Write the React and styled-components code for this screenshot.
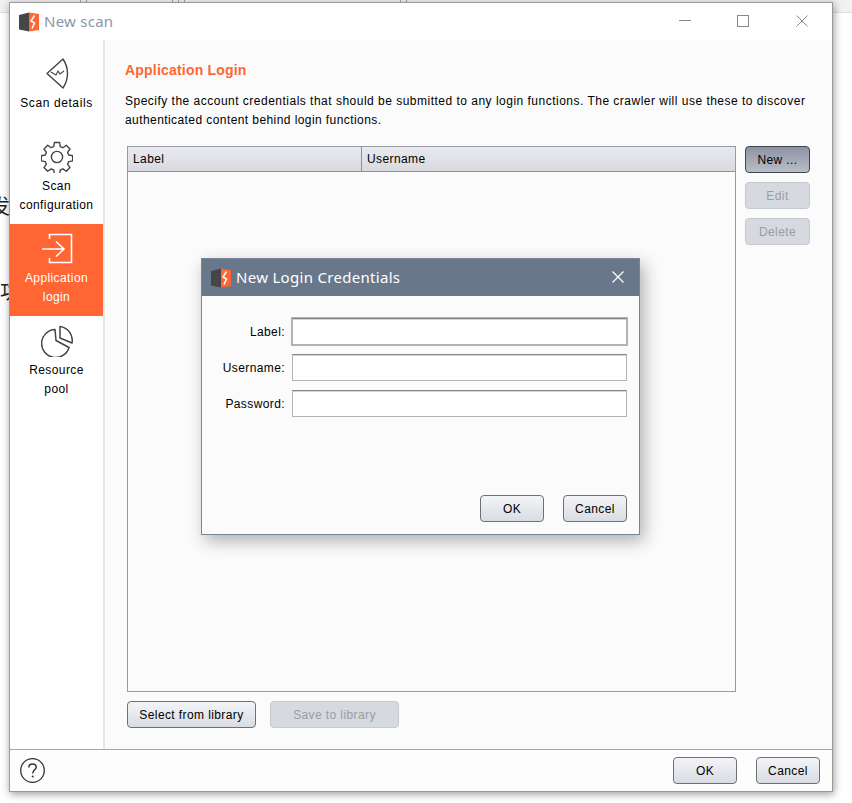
import React from "react";
import styled, { createGlobalStyle } from "styled-components";

const GlobalStyle = createGlobalStyle`
  html, body {
    margin: 0;
    padding: 0;
    background: #fff;
  }
  body {
    font-family: "Liberation Sans", Arial, sans-serif;
    font-size: 12px;
    color: #000;
  }
`;

const Desktop = styled.div`
  position: relative;
  width: 852px;
  height: 803px;
  overflow: hidden;
  background: #fff;
`;

const BackdropEdge = styled.div`
  position: absolute;
  top: 0;
  left: 0;
  right: 0;
  height: 12px;
  background: #f1f1f1;
  border-bottom: 1px solid #dedede;
`;

const BackdropTick = styled.div`
  position: absolute;
  top: 0;
  left: ${p => p.$left}px;
  width: 1px;
  height: 3px;
  background: #a8a8a8;
`;

const BackdropGlyph = styled.span`
  position: absolute;
  left: ${p => p.$left}px;
  top: ${p => p.$top}px;
  font-family: "Noto Sans CJK SC", sans-serif;
  font-size: 20px;
  line-height: 24px;
  color: #222;
`;

const Window = styled.div`
  position: absolute;
  left: 9px;
  top: 2px;
  width: 822px;
  height: 788px;
  display: flex;
  flex-direction: column;
  background: #fbfbfb;
  border: 1px solid #9a9a9a;
  box-shadow: 1px 2px 8px rgba(0, 0, 0, 0.4);
`;

const TitleBar = styled.div`
  flex: 0 0 37px;
  display: flex;
  align-items: center;
  padding: 0 0 0 9px;
  background: #fff;
`;

const WindowTitle = styled.span`
  margin: 0 0 2px 5px;
  font-family: "Noto Sans", sans-serif;
  font-size: 15px;
  letter-spacing: 0.25px;
  color: #8c96a4;
`;

const WindowControls = styled.div`
  margin-left: auto;
  align-self: flex-start;
  display: flex;
`;

const ControlButton = styled.div`
  width: ${p => p.$width}px;
  height: 36px;
  display: flex;
  align-items: center;
  justify-content: center;
`;

const Body = styled.div`
  flex: 1;
  min-height: 0;
  display: flex;
`;

const Sidebar = styled.nav`
  flex: 0 0 93px;
  background: #fff;
  border-right: 2px solid #e6e6e6;
`;

const NavItem = styled.div`
  box-sizing: border-box;
  height: 92px;
  padding-bottom: ${p => p.$lift || 0}px;
  display: flex;
  flex-direction: column;
  align-items: center;
  justify-content: center;
  text-align: center;
  background: ${p => (p.$active ? "#ff6633" : "transparent")};
  color: ${p => (p.$active ? "#fff" : "#000")};
  svg {
    display: block;
    margin-bottom: 4px;
  }
`;

const NavLabel = styled.div`
  font-size: 12px;
  line-height: 19px;
  letter-spacing: ${p => p.$spacing || 0.4}px;
`;

const Content = styled.main`
  flex: 1;
  min-width: 0;
  display: flex;
  flex-direction: column;
  padding: 21px 22px 21px 20px;
`;

const Heading = styled.h2`
  margin: 0;
  font-size: 14px;
  line-height: 18px;
  font-weight: 700;
  letter-spacing: 0.2px;
  color: #ff6633;
`;

const Description = styled.div`
  margin: 13px 0 0;
  font-size: 12px;
  line-height: 19px;
`;

const DescriptionLine = styled.div`
  white-space: nowrap;
  letter-spacing: ${p => p.$spacing}px;
`;

const TableRow = styled.div`
  flex: 1;
  min-height: 0;
  display: flex;
  gap: 9px;
  margin: 16px 0 0 2px;
`;

const Table = styled.div`
  flex: 0 0 609px;
  box-sizing: border-box;
  background: #fbfbfb;
  border: 1px solid #9a9aa6;
`;

const TableHead = styled.div`
  height: 24px;
  display: flex;
  background: linear-gradient(#e9eaee, #d8dae0);
  border-bottom: 1px solid #8e929c;
`;

const HeadCell = styled.div`
  box-sizing: border-box;
  flex: ${p => (p.$grow ? "1" : "0 0 233px")};
  padding-left: 5px;
  line-height: 24px;
  letter-spacing: 0.4px;
  border-left: ${p => (p.$grow ? "1px solid #8e929c" : "none")};
`;

const SideButtons = styled.div`
  flex: 0 0 65px;
  display: flex;
  flex-direction: column;
  gap: 9px;
`;

const Button = styled.button`
  box-sizing: border-box;
  width: ${p => p.$width}px;
  height: 27px;
  padding: 0;
  font-family: inherit;
  font-size: 12px;
  letter-spacing: 0.4px;
  border-radius: 4px;
  color: ${p => (p.$disabled ? "#9a9da4" : "#000")};
  border: 1px solid ${p => (p.$disabled ? "#c6c9d0" : p.$primary ? "#3f4450" : "#6e7078")};
  background: ${p =>
    p.$disabled
      ? "#d6d9df"
      : p.$primary
      ? "linear-gradient(#8d93a3, #b9bdc8)"
      : "linear-gradient(#f3f4f6, #d9dce3)"};
`;

const LibraryBar = styled.div`
  display: flex;
  gap: 14px;
  margin: 9px 0 0 2px;
`;

const Footer = styled.footer`
  flex: 0 0 41px;
  display: flex;
  align-items: center;
  padding: 0 12px 0 10px;
  border-top: 1px solid #a6a6a6;
  background: #fdfdfd;
`;

const FooterButtons = styled.div`
  margin-left: auto;
  display: flex;
  gap: 19px;
`;

const Dialog = styled.div`
  position: absolute;
  left: 201px;
  top: 258px;
  width: 437px;
  height: 275px;
  display: flex;
  flex-direction: column;
  background: #fbfbfb;
  border: 1px solid #78849a;
  box-shadow: 4px 6px 16px rgba(0, 0, 0, 0.3);
`;

const DialogBar = styled.div`
  flex: 0 0 37px;
  display: flex;
  align-items: center;
  padding: 0 15px 0 9px;
  background: #68778a;
`;

const DialogTitle = styled.span`
  margin: 0 0 2px 5px;
  font-family: "Noto Sans", sans-serif;
  font-size: 15px;
  letter-spacing: 0.3px;
  color: #fff;
`;

const DialogClose = styled.svg`
  margin: 0 0 1px auto;
`;

const Form = styled.div`
  flex: 1;
  display: grid;
  grid-template-columns: 83px 335px;
  grid-auto-rows: 27px;
  column-gap: 7px;
  row-gap: 9px;
  align-content: start;
  padding: 22px 0 0;
`;

const FieldLabel = styled.label`
  text-align: right;
  line-height: 28px;
  letter-spacing: 0.4px;
`;

const Field = styled.div`
  box-sizing: border-box;
  background: #fff;
  border: 1px solid #b4b4b4;
  border-top-color: #858585;
  box-shadow: inset 0 1px 0 #d4d4d4 ${p => (p.$focused ? ", 0 0 0 1px #8fb8e6" : "")};
`;

const DialogActions = styled.div`
  display: flex;
  justify-content: flex-end;
  gap: 19px;
  padding: 0 12px 12px 0;
`;

const LogoIcon = () => (
  <svg width="20" height="20" viewBox="0 0 20 20">
    <path d="M0 3 L10 0.5 V19.5 L0 17.5 Z" fill="#45454a" />
    <path d="M10 0.5 L20 2 V18 L10 19.5 Z" fill="#ff6633" />
    <path d="M15.5 3.5 L12 9 L15.5 11 L13 16.5" fill="none" stroke="#fff" strokeWidth="1.5" />
  </svg>
);

const ScanDetailsIcon = () => (
  <svg width="32" height="32" viewBox="0 0 32 32" fill="none" stroke="#444" strokeWidth="1.4">
    <path d="M6 15.5 L22 1 C28 10 28 21 22 30 Z" strokeLinejoin="round" />
    <path d="M10 14 L15 17 L17 13 L19 16 L23 13" strokeWidth="1.1" />
  </svg>
);

const GearIcon = () => (
  <svg width="32" height="32" viewBox="0 0 32 32" fill="none" stroke="#444" strokeWidth="1.4">
    <path
      strokeLinejoin="round"
      d="M13.4 1.5 h5.2 l0.7 4.1 l2.6 1.1 l3.4 -2.4 l3.7 3.7 l-2.4 3.4 l1.1 2.6 l4 0.7 v5.2 l-4 0.7 l-1.1 2.6 l2.4 3.4 l-3.7 3.7 l-3.4 -2.4 l-2.6 1.1 l-0.7 4 h-5.2 l-0.7 -4 l-2.6 -1.1 l-3.4 2.4 l-3.7 -3.7 l2.4 -3.4 l-1.1 -2.6 l-4 -0.7 v-5.2 l4 -0.7 l1.1 -2.6 l-2.4 -3.4 l3.7 -3.7 l3.4 2.4 l2.6 -1.1 Z"
    />
    <circle cx="16" cy="16" r="5.6" />
  </svg>
);

const LoginIcon = () => (
  <svg width="32" height="32" viewBox="0 0 32 32" fill="none" stroke="#fff" strokeWidth="1.6">
    <path d="M8.5 6 V1.5 H30.5 V29.5 H8.5 V25" />
    <path d="M1 16 H23 M15 8.5 L23 16 L15 23.5" />
  </svg>
);

const PieIcon = () => (
  <svg width="32" height="32" viewBox="0 0 32 32" fill="none" stroke="#444" strokeWidth="1.5">
    <path d="M14 4.5 A14 14 0 1 0 28 22.5 L15 15.5 Z" strokeLinejoin="round" />
    <path d="M19 1.5 A14 14 0 0 1 31 18 L19 13 Z" strokeLinejoin="round" />
  </svg>
);

const HelpIcon = () => (
  <svg width="25" height="25" viewBox="0 0 25 25" fill="none" stroke="#333" strokeWidth="1.3">
    <circle cx="12.5" cy="12.5" r="11.8" />
    <path d="M8.8 9.6 C8.8 7.2 10.6 6 12.5 6 C14.6 6 16.2 7.4 16.2 9.2 C16.2 11.7 12.7 12 12.7 15.4" strokeWidth="1.5" />
    <circle cx="12.7" cy="18.6" r="1" fill="#333" stroke="none" />
  </svg>
);

const navItems = [
  { label: ["Scan details"], icon: <ScanDetailsIcon />, lift: 2, spacing: 0.6 },
  { label: ["Scan", "configuration"], icon: <GearIcon /> },
  { label: ["Application", "login"], icon: <LoginIcon />, active: true },
  { label: ["Resource", "pool"], icon: <PieIcon /> },
];

const fields = [
  { label: "Label:", focused: true },
  { label: "Username:" },
  { label: "Password:" },
];

const backdropTicks = [80, 86, 172, 178, 184, 400, 406];

export default function App() {
  return (
    <Desktop>
      <GlobalStyle />
      <BackdropEdge />
      {backdropTicks.map(left => (
        <BackdropTick key={left} $left={left} />
      ))}
      <BackdropGlyph $left={-10} $top={194}>发</BackdropGlyph>
      <BackdropGlyph $left={0} $top={279}>功</BackdropGlyph>

      <Window>
        <TitleBar>
          <LogoIcon />
          <WindowTitle>New scan</WindowTitle>
          <WindowControls>
            <ControlButton $width={58}>
              <svg width="12" height="12" viewBox="0 0 12 12" stroke="#888" fill="none">
                <path d="M0 5.5 H12" />
              </svg>
            </ControlButton>
            <ControlButton $width={58}>
              <svg width="12" height="12" viewBox="0 0 12 12" stroke="#888" fill="none">
                <rect x="0.5" y="0.5" width="11" height="11" />
              </svg>
            </ControlButton>
            <ControlButton $width={60}>
              <svg width="12" height="12" viewBox="0 0 12 12" stroke="#888" fill="none">
                <path d="M0.5 0.5 L11.5 11.5 M11.5 0.5 L0.5 11.5" />
              </svg>
            </ControlButton>
          </WindowControls>
        </TitleBar>

        <Body>
          <Sidebar>
            {navItems.map(item => (
              <NavItem key={item.label[0]} $active={item.active} $lift={item.lift}>
                {item.icon}
                {item.label.map(line => (
                  <NavLabel key={line} $spacing={item.spacing}>{line}</NavLabel>
                ))}
              </NavItem>
            ))}
          </Sidebar>

          <Content>
            <Heading>Application Login</Heading>
            <Description>
              <DescriptionLine $spacing={0.49}>
                Specify the account credentials that should be submitted to any login functions. The crawler will use these to discover
              </DescriptionLine>
              <DescriptionLine $spacing={0.42}>
                authenticated content behind login functions.
              </DescriptionLine>
            </Description>

            <TableRow>
              <Table>
                <TableHead>
                  <HeadCell>Label</HeadCell>
                  <HeadCell $grow>Username</HeadCell>
                </TableHead>
              </Table>
              <SideButtons>
                <Button $width={65} $primary>New ...</Button>
                <Button $width={65} $disabled>Edit</Button>
                <Button $width={65} $disabled>Delete</Button>
              </SideButtons>
            </TableRow>

            <LibraryBar>
              <Button $width={129}>Select from library</Button>
              <Button $width={129} $disabled>Save to library</Button>
            </LibraryBar>
          </Content>
        </Body>

        <Footer>
          <HelpIcon />
          <FooterButtons>
            <Button $width={64}>OK</Button>
            <Button $width={64}>Cancel</Button>
          </FooterButtons>
        </Footer>
      </Window>

      <Dialog>
        <DialogBar>
          <LogoIcon />
          <DialogTitle>New Login Credentials</DialogTitle>
          <DialogClose width="12" height="12" viewBox="0 0 12 12" stroke="#fff" fill="none" strokeWidth="1.2">
            <path d="M0.5 0.5 L11.5 11.5 M11.5 0.5 L0.5 11.5" />
          </DialogClose>
        </DialogBar>
        <Form>
          {fields.map(field => (
            <React.Fragment key={field.label}>
              <FieldLabel>{field.label}</FieldLabel>
              <Field $focused={field.focused} />
            </React.Fragment>
          ))}
        </Form>
        <DialogActions>
          <Button $width={64}>OK</Button>
          <Button $width={64}>Cancel</Button>
        </DialogActions>
      </Dialog>
    </Desktop>
  );
}
